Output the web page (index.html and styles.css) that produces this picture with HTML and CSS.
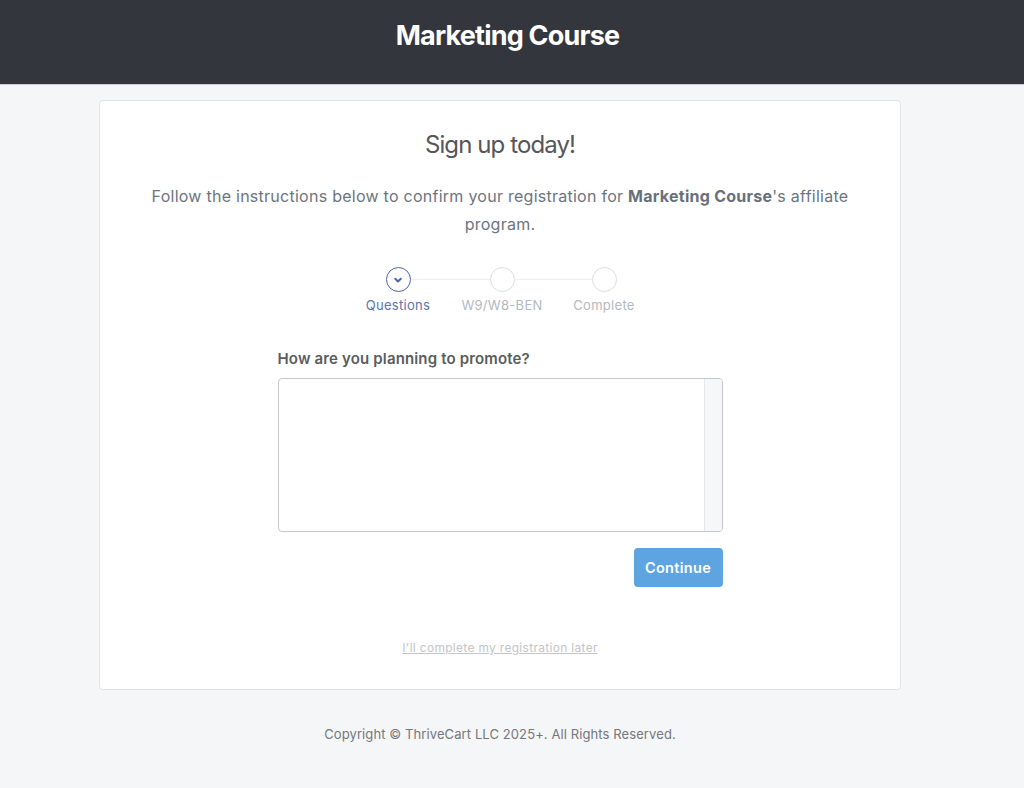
FILE: index.html
```html
<!DOCTYPE html>
<html>
<head>
<meta charset="utf-8">
<link rel="stylesheet" href="styles.css">
</head>
<body>
<header class="topbar"><h1 class="brand">Marketing Course</h1></header>
<main class="card">
  <h2 class="title">Sign up today!</h2>
  <p class="intro">Follow the instructions below to confirm your registration for <strong>Marketing Course</strong>'s affiliate program.</p>
  <div class="steps">
    <div class="step active">
      <span class="dot"><svg width="12" height="12" viewBox="0 0 12 12"><path d="M3.2 4.8 L6 7.4 L8.8 4.8" fill="none" stroke="#4a64a8" stroke-width="2" stroke-linecap="round" stroke-linejoin="round"/></svg></span>
      <span class="label">Questions</span>
    </div>
    <div class="step">
      <span class="dot"></span>
      <span class="label">W9/W8-BEN</span>
    </div>
    <div class="step">
      <span class="dot"></span>
      <span class="label">Complete</span>
    </div>
  </div>
  <form class="form">
    <label class="q">How are you planning to promote?</label>
    <div class="textarea"><div class="ta-body"></div><div class="gutter"></div></div>
    <div class="actions"><button type="button" class="btn">Continue</button></div>
  </form>
  <a class="later" href="#">I'll complete my registration later</a>
</main>
<footer class="foot">Copyright © ThriveCart LLC 2025+. All Rights Reserved.</footer>
</body>
</html>
```
FILE: styles.css
```css
* { box-sizing: border-box; }
html, body { margin: 0; padding: 0; }
body {
  background: #f5f6f8;
  font-family: Inter, "Noto Sans", "Liberation Sans", sans-serif;
  color: #555;
}
.topbar {
  background: #33363d;
  height: 85px;
  display: flex;
  align-items: center;
  justify-content: center;
  border-bottom: 1px solid #c9ccd1;
  padding: 0 9px 14px 0;
}
.brand {
  margin: 0;
  color: #fff;
  font-size: 27px;
  font-weight: 700;
  letter-spacing: -0.8px;
}
.card {
  width: 802px;
  margin: 15px 0 0 99px;
  background: #fff;
  border: 1px solid #e1e3e6;
  border-radius: 4px;
  padding: 27px 40px 33px;
  display: flex;
  flex-direction: column;
  align-items: center;
}
.title {
  margin: 0;
  font-size: 24px;
  font-weight: 400;
  letter-spacing: -0.9px;
  color: #555659;
  line-height: 34px;
}
.intro {
  margin: 20px 0 0;
  max-width: 715px;
  text-align: center;
  font-size: 16px;
  line-height: 28px;
  color: #6c7480;
  letter-spacing: 0.26px;
}
.intro strong { font-weight: 700; color: #68707c; }
.steps {
  display: flex;
  margin-top: 29px;
}
.step {
  width: 104px;
  display: flex;
  flex-direction: column;
  align-items: center;
  position: relative;
}
.step + .step::before {
  content: "";
  position: absolute;
  top: 12px;
  right: 50%;
  width: 104px;
  height: 1px;
  background: #eceef0;
  z-index: 0;
}
.step:nth-child(3)::before { width: 100px; }
.step:nth-child(3) { width: 100px; }
.dot {
  width: 25px;
  height: 25px;
  border-radius: 50%;
  border: 1.5px solid #dcdee2;
  background: #fff;
  display: flex;
  align-items: center;
  justify-content: center;
  position: relative;
  z-index: 1;
}
.step.active .dot { border-color: #4a64a8; }
.label {
  margin-top: 4px;
  font-size: 13px;
  color: #b4b8bf;
  letter-spacing: 0.3px;
  line-height: 18px;
}
.step.active .label { color: #5b75ad; }
.form {
  width: 445px;
  margin-top: 35px;
}
.q {
  display: block;
  font-size: 15px;
  font-weight: 600;
  color: #5a5c60;
  letter-spacing: 0.15px;
  line-height: 20px;
}
.textarea {
  margin-top: 9px;
  height: 154px;
  border: 1px solid #c4c6c9;
  border-radius: 4px;
  display: flex;
  overflow: hidden;
}
.ta-body { flex: 1; }
.gutter {
  width: 18px;
  background: #f6f7f8;
  border-left: 1px solid #e6e7e9;
}
.actions {
  display: flex;
  justify-content: flex-end;
  margin-top: 16px;
}
.btn {
  width: 89px;
  height: 39px;
  border: none;
  border-radius: 4px;
  background: #5da4e1;
  color: #fff;
  font-family: inherit;
  font-size: 14.5px;
  font-weight: 600;
  letter-spacing: 0.3px;
}
.later {
  margin-top: 53px;
  font-size: 12px;
  color: #c3c5c8;
  letter-spacing: 0.3px;
  text-decoration: underline;
  line-height: 16px;
}
.foot {
  width: 802px;
  margin: 36px 0 0 99px;
  text-align: center;
  font-size: 13px;
  color: #74777c;
  letter-spacing: 0.1px;
}
```
